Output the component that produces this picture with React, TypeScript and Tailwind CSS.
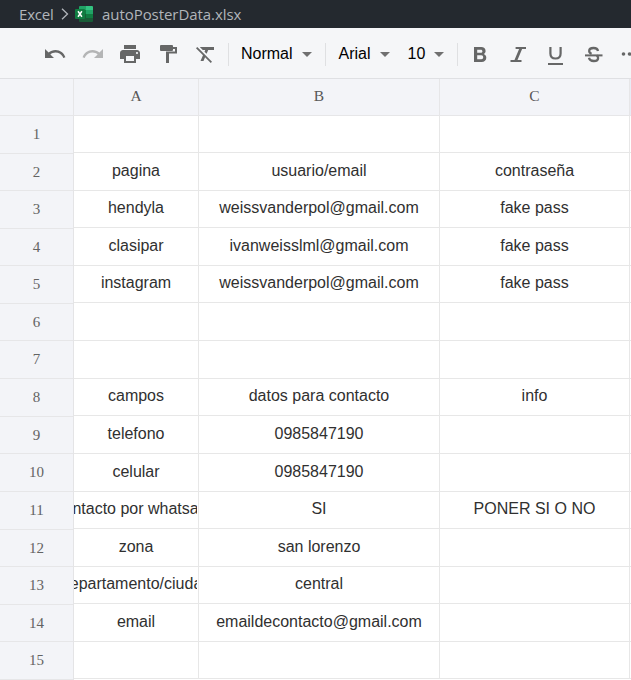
import type { ReactNode } from "react";

type Row = { body: string; head: string; cells: [string, string, string] };

const rows: Row[] = [
  { body: "h-[37px]", head: "h-[38px]", cells: ["", "", ""] },
  { body: "h-[38px]", head: "h-[37px]", cells: ["pagina", "usuario/email", "contraseña"] },
  { body: "h-[37px]", head: "h-[38px]", cells: ["hendyla", "weissvanderpol@gmail.com", "fake pass"] },
  { body: "h-[38px]", head: "h-[37px]", cells: ["clasipar", "ivanweisslml@gmail.com", "fake pass"] },
  { body: "h-[37px]", head: "h-[38px]", cells: ["instagram", "weissvanderpol@gmail.com", "fake pass"] },
  { body: "h-[38px]", head: "h-[37px]", cells: ["", "", ""] },
  { body: "h-[38px]", head: "h-[38px]", cells: ["", "", ""] },
  { body: "h-[37px]", head: "h-[38px]", cells: ["campos", "datos para contacto", "info"] },
  { body: "h-[38px]", head: "h-[37px]", cells: ["telefono", "0985847190", ""] },
  { body: "h-[38px]", head: "h-[38px]", cells: ["celular", "0985847190", ""] },
  { body: "h-[37px]", head: "h-[38px]", cells: ["contacto por whatsapp", "SI", "PONER SI O NO"] },
  { body: "h-[38px]", head: "h-[37px]", cells: ["zona", "san lorenzo", ""] },
  { body: "h-[37px]", head: "h-[38px]", cells: ["departamento/ciudad", "central", ""] },
  { body: "h-[38px]", head: "h-[37px]", cells: ["email", "emaildecontacto@gmail.com", ""] },
  { body: "h-[37px]", head: "h-[38px]", cells: ["", "", ""] },
];

const columns = ["w-[125px]", "w-[241px]", "w-[190px]"];

function Icon({ className = "", children }: { className?: string; children: ReactNode }) {
  return (
    <svg viewBox="0 0 24 24" className={`size-6 shrink-0 fill-[#666767] ${className}`}>
      {children}
    </svg>
  );
}

function Caret({ className }: { className: string }) {
  return (
    <svg viewBox="0 0 10 5" className={`h-[5px] w-[10px] shrink-0 fill-[#707070] ${className}`}>
      <path d="M0 0h10L5 5z" />
    </svg>
  );
}

function Divider({ className }: { className: string }) {
  return <div className={`h-[23px] w-px shrink-0 bg-[#dfe0e2] ${className}`} />;
}

function ExcelLogo() {
  return (
    <svg viewBox="0 0 18 16" className="ml-[6px] h-4 w-[18px] shrink-0">
      <path d="M5 0h6v4H4V1a1 1 0 0 1 1-1z" fill="#21a366" />
      <path d="M11 0h6a1 1 0 0 1 1 1v3h-7z" fill="#33c481" />
      <path d="M4 4h7v4H4z" fill="#107c41" />
      <path d="M11 4h7v4h-7z" fill="#21a366" />
      <path d="M11 8h7v4h-7z" fill="#107c41" />
      <path d="M4 8h7v4h7v3a1 1 0 0 1-1 1H5a1 1 0 0 1-1-1z" fill="#185c37" />
      <rect y="3" width="10" height="10" rx="1" fill="#107c41" />
      <path d="M3 5.3 6.9 10.7M6.9 5.3 3 10.7" stroke="#fff" strokeWidth="1.5" />
    </svg>
  );
}

function TitleBar() {
  return (
    <header className="flex h-7 shrink-0 items-center bg-[#24292f] pl-[19px] font-['Open_Sans',sans-serif] text-[15px] text-[#b1b5ba]">
      <span className="w-[35px] tracking-[-0.2px]">Excel</span>
      <svg viewBox="0 0 8 12" className="ml-[7px] h-3 w-2 shrink-0 fill-none stroke-[#b1b5ba]">
        <path d="M1 .7 6.5 6 1 11.3" strokeWidth="1.3" />
      </svg>
      <ExcelLogo />
      <span className="ml-[9px] whitespace-nowrap tracking-[-0.06px]">autoPosterData.xlsx</span>
    </header>
  );
}

function Toolbar() {
  return (
    <div className="flex h-[51px] shrink-0 items-center overflow-hidden border-b border-[#dfe0e3] bg-[#f5f6f8] pt-0.5 pl-[43px] text-base text-black">
      <Icon>
        <path d="M12.5 8c-2.65 0-5.05.99-6.9 2.6L2 7v9h9l-3.62-3.62c1.39-1.16 3.16-1.88 5.12-1.88 2.9 0 5.45 1.5 6.9 3.8.33.54.6 1.1.8 1.7l2.2-.8C21 11 17.1 8 12.5 8z" />
      </Icon>
      <Icon className="ml-[14px] opacity-45">
        <path d="M11.5 8c2.65 0 5.05.99 6.9 2.6L22 7v9h-9l3.62-3.62c-1.39-1.16-3.16-1.88-5.12-1.88-2.9 0-5.45 1.5-6.9 3.8-.33.54-.6 1.1-.8 1.7l-2.2-.8C3 11 6.9 8 11.5 8z" />
      </Icon>
      <Icon className="ml-[13px]">
        <path d="M19 8H5c-1.66 0-3 1.34-3 3v6h4v4h12v-4h4v-6c0-1.66-1.34-3-3-3zm-3 11H8v-5h8v5zm3-7c-.55 0-1-.45-1-1s.45-1 1-1 1 .45 1 1-.45 1-1 1zm-1-9H6v4h12V3z" />
      </Icon>
      <Icon className="ml-[14px]">
        <path d="M5 3h11a1 1 0 0 1 1 1v1h4v6.5h-8V21h-3V9.5h9V7h-2v1a1 1 0 0 1-1 1H5a1 1 0 0 1-1-1V4a1 1 0 0 1 1-1z" />
      </Icon>
      <Icon className="ml-[14px]">
        <path d="M3.27 5 2 6.27l6.97 6.97L6.5 19h3l1.57-3.66L16.73 21 18 19.73 3.55 5.27 3.27 5zM6 5v.18L8.82 8h2.4l-.72 1.68 2.1 2.1L14.21 8H20V5H6z" />
      </Icon>
      <Divider className="ml-[10px]" />
      <span className="ml-[12px] w-[52px]">Normal</span>
      <Caret className="ml-[9px]" />
      <Divider className="ml-[13px]" />
      <span className="ml-[13px] w-[33px]">Arial</span>
      <Caret className="ml-[9px]" />
      <span className="ml-[18px] w-[18px]">10</span>
      <Caret className="ml-[9px]" />
      <Divider className="ml-[13px]" />
      <Icon className="ml-[10px]">
        <path fillRule="evenodd" d="M6 5h7.2c2.6 0 4.4 1.6 4.4 3.9 0 1.4-.7 2.5-1.8 3.2 1.6.7 2.5 2 2.5 3.6 0 2.6-1.9 4.3-4.7 4.3H6zM9.2 7.7v3.1h3.6c1 0 1.6-.6 1.6-1.55s-.6-1.55-1.6-1.55zm0 5.5v4h4.1c1.2 0 1.9-.8 1.9-2s-.7-2-1.9-2z" />
      </Icon>
      <Icon className="ml-[14px]">
        <path d="M9.6 5H20v2h-3.9l-4.6 11h4V20H4.5v-2h4l4.6-11H9.6z" />
      </Icon>
      <Icon className="ml-[14px]">
        <path d="M6.4 5v6.5c0 3.2 2 5 5.1 5s5.1-1.8 5.1-5V5" fill="none" stroke="#666767" strokeWidth="2.2" />
        <path d="M4 21h15v2H4z" />
      </Icon>
      <Icon className="ml-[13px]">
        <path d="M17 9c-.3-2-1.9-3-4.5-3C9.8 6 8.2 7.2 8.2 9c0 1.3.8 2.2 2.4 2.8M8 15.8c.4 2.1 2.1 3.2 4.8 3.2s4.3-1.2 4.3-3.1c0-1.1-.5-1.8-1.4-2.4" fill="none" stroke="#666767" strokeWidth="2.3" />
        <path d="M4 12.4h17.5v2H4z" />
      </Icon>
      <Icon className="ml-[15px]">
        <circle cx="3.5" cy="12" r="1.8" />
        <circle cx="9.5" cy="12" r="1.8" />
        <circle cx="15.5" cy="12" r="1.8" />
      </Icon>
    </div>
  );
}

export default function App() {
  return (
    <div className="flex h-[680px] w-[631px] flex-col overflow-hidden bg-white font-['Liberation_Sans',Arial,sans-serif]">
      <TitleBar />
      <Toolbar />
      <div className="flex h-[37px] shrink-0 border-b border-[#e6e6e8] bg-[#f3f4f8] font-['Liberation_Serif',serif] text-[15.5px] text-[#585757]">
        <div className="w-[74px] shrink-0 border-r border-[#e6e6e8]" />
        {["A", "B", "C"].map((name, i) => (
          <div key={name} className={`flex shrink-0 items-center justify-center border-r border-[#e6e6e8] pb-0.5 ${columns[i]}`}>
            {name}
          </div>
        ))}
        <div className="flex-1 bg-[#e8ecf6]" />
      </div>
      <div className="flex min-h-0 flex-1 overflow-hidden">
        <div className="w-[74px] shrink-0 border-r border-[#e4e4e6] bg-[#f3f4f8] font-['Liberation_Serif',serif] text-[15px] text-[#636363]">
          {rows.map((row, i) => (
            <div key={i} className={`flex items-center justify-center border-b border-[#e6e6e8] ${row.head}`}>
              {i + 1}
            </div>
          ))}
        </div>
        <div className="flex-1 text-base text-[#303030]">
          {rows.map((row, i) => (
            <div key={i} className={`flex border-b border-[#e7e7e7] ${row.body}`}>
              {row.cells.map((text, c) => (
                <div key={c} className={`flex shrink-0 justify-center border-r border-[#e7e7e7] ${columns[c]}`}>
                  <div className="mr-px flex flex-1 items-center justify-center overflow-hidden pb-0.5 pl-px whitespace-nowrap">
                    {text}
                  </div>
                </div>
              ))}
            </div>
          ))}
        </div>
      </div>
    </div>
  );
}
